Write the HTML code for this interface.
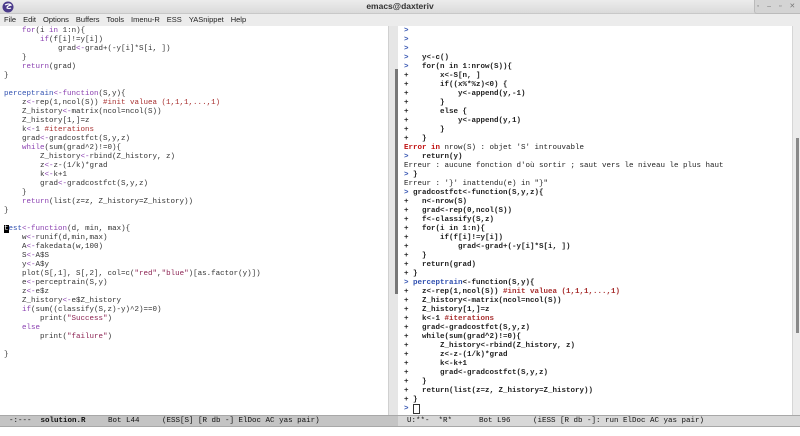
<!DOCTYPE html>
<html><head><meta charset="utf-8"><style>
*{margin:0;padding:0;box-sizing:border-box}
body{width:800px;height:436px;overflow:hidden;background:#fff;font-family:"Liberation Sans",sans-serif;position:relative}
#title{position:absolute;left:0;top:0;width:800px;height:14px;background:linear-gradient(#ececec,#dadada);border-bottom:1px solid #c8c8c8}
#title .t{position:absolute;left:0;width:800px;text-align:center;top:1px;font-size:8.5px;font-weight:bold;color:#333}
#title .btn{position:absolute;right:0;top:0;width:46px;height:14px;background:#d4d4d4;border-left:1px solid #bbb;border-bottom:1px solid #bbb;border-radius:0 0 0 3px;font-size:7px;color:#777;text-align:center;line-height:13px;letter-spacing:3px}
#menu{position:absolute;left:0;top:14px;width:800px;height:12px;background:#ececec;font-size:7.5px;color:#222;line-height:12px;padding-left:4px}
#menu span{margin-right:7px}
.code{position:absolute;top:27px;font-family:"Liberation Mono",monospace;font-size:7.5px;line-height:9px;white-space:pre;color:#333}
#L{left:4px}
#R{left:404px;font-weight:bold;color:#222}
.k{color:#8a3fb0}.f{color:#3050b0}.c{color:#a83030}.s{color:#8b2252}.e{color:#c01010}.p{color:#3050b0}
#sbL{position:absolute;left:388px;top:26px;width:10px;height:389px;background:#e6e6e6;border-left:1px solid #d0d0d0}
#sbL i{position:absolute;left:6px;top:43px;width:3px;height:225px;background:#777}
#sbR{position:absolute;left:792px;top:26px;width:8px;height:389px;background:#ececec;border-left:1px solid #d6d6d6}
#sbR i{position:absolute;left:3px;top:112px;width:3px;height:195px;background:#888}
.ml{position:absolute;top:415px;height:12px;background:#c4c4c4;border-top:1px solid #a8a8a8;border-bottom:1px solid #a8a8a8;font-family:"Liberation Mono",monospace;font-size:7.5px;line-height:10px;white-space:pre;color:#111}
.cur{background:#000;color:#fff}
</style></head><body>
<div id="title"><svg style="position:absolute;left:2px;top:1px" width="12" height="12" viewBox="0 0 12 12"><circle cx="6" cy="6" r="5.5" fill="#4a3a8a"/><path d="M3 4 Q7 2 9 4 Q5 5 5 7 Q7 8 9 7" stroke="#fff" stroke-width="1.2" fill="none"/></svg><div class="t">emacs@daxteriv</div><div class="btn">◦ ‒ ▫ ✕</div></div>
<div id="menu"><span>File</span><span>Edit</span><span>Options</span><span>Buffers</span><span>Tools</span><span>Imenu-R</span><span>ESS</span><span>YASnippet</span><span>Help</span></div>
<div class="code" id="L">    <span class="k">for</span>(i <span class="k">in</span> 1:n){
        <span class="k">if</span>(f[i]!=y[i])
            grad<span class="k">&lt;-</span>grad+(-y[i]*S[i, ])
    }
    <span class="k">return</span>(grad)
}

<span class="f">perceptrain</span><span class="k">&lt;-</span><span class="k">function</span>(S,y){
    z<span class="k">&lt;-</span>rep(1,ncol(S)) <span class="c">#init valuea (1,1,1,...,1)</span>
    Z_history<span class="k">&lt;-</span>matrix(ncol=ncol(S))
    Z_history[1,]=z
    k<span class="k">&lt;-</span>1 <span class="c">#iterations</span>
    grad<span class="k">&lt;-</span>gradcostfct(S,y,z)
    <span class="k">while</span>(sum(grad^2)!=0){
        Z_history<span class="k">&lt;-</span>rbind(Z_history, z)
        z<span class="k">&lt;-</span>z-(1/k)*grad
        k<span class="k">&lt;-</span>k+1
        grad<span class="k">&lt;-</span>gradcostfct(S,y,z)
    }
    <span class="k">return</span>(list(z=z, Z_history=Z_history))
}

<span class="cur">t</span><span class="f">est</span><span class="k">&lt;-</span><span class="k">function</span>(d, min, max){
    w<span class="k">&lt;-</span>runif(d,min,max)
    A<span class="k">&lt;-</span>fakedata(w,100)
    S<span class="k">&lt;-</span>A$S
    y<span class="k">&lt;-</span>A$y
    plot(S[,1], S[,2], col=c(<span class="s">"red"</span>,<span class="s">"blue"</span>)[as.factor(y)])
    e<span class="k">&lt;-</span>perceptrain(S,y)
    z<span class="k">&lt;-</span>e$z
    Z_history<span class="k">&lt;-</span>e$Z_history
    <span class="k">if</span>(sum((classify(S,z)-y)^2)==0)
        print(<span class="s">"Success"</span>)
    <span class="k">else</span>
        print(<span class="s">"failure"</span>)

}</div>
<div id="sbL"><i></i></div>
<div class="code" id="R"><span class="p">&gt;</span>
<span class="p">&gt;</span>
<span class="p">&gt;</span>
<span class="p">&gt;</span>   y&lt;-c()
<span class="p">&gt;</span>   for(n in 1:nrow(S)){
+       x&lt;-S[n, ]
+       if((x%*%z)&lt;0) {
+           y&lt;-append(y,-1)
+       }
+       else {
+           y&lt;-append(y,1)
+       }
+   }
<span class="e">Error in</span> <span style="font-weight:normal">nrow(S) : objet 'S' introuvable</span>
<span class="p">&gt;</span>   return(y)
<span style="font-weight:normal">Erreur : aucune fonction d'où sortir ; saut vers le niveau le plus haut</span>
<span class="p">&gt;</span> }
<span style="font-weight:normal">Erreur : '}' inattendu(e) in "}"</span>
<span class="p">&gt;</span> gradcostfct&lt;-function(S,y,z){
+   n&lt;-nrow(S)
+   grad&lt;-rep(0,ncol(S))
+   f&lt;-classify(S,z)
+   for(i in 1:n){
+       if(f[i]!=y[i])
+           grad&lt;-grad+(-y[i]*S[i, ])
+   }
+   return(grad)
+ }
<span class="p">&gt;</span> <span class="f">perceptrain</span>&lt;-function(S,y){
+   z&lt;-rep(1,ncol(S)) <span class="c">#init valuea (1,1,1,...,1)</span>
+   Z_history&lt;-matrix(ncol=ncol(S))
+   Z_history[1,]=z
+   k&lt;-1 <span class="c">#iterations</span>
+   grad&lt;-gradcostfct(S,y,z)
+   while(sum(grad^2)!=0){
+       Z_history&lt;-rbind(Z_history, z)
+       z&lt;-z-(1/k)*grad
+       k&lt;-k+1
+       grad&lt;-gradcostfct(S,y,z)
+   }
+   return(list(z=z, Z_history=Z_history))
+ }
<span class="p">&gt;</span> <span style="border:1px solid #333;font-weight:normal"> </span></div>
<div id="sbR"><i></i></div>
<div class="ml" style="left:0;width:398px">  -:---  <b>solution.R</b>     Bot L44     (ESS[S] [R db -] ElDoc AC yas pair)</div>
<div class="ml" style="left:398px;width:402px;background:#d8d8d8">  U:**-  *R*      Bot L96     (iESS [R db -]: run ElDoc AC yas pair)</div>
</body></html>
